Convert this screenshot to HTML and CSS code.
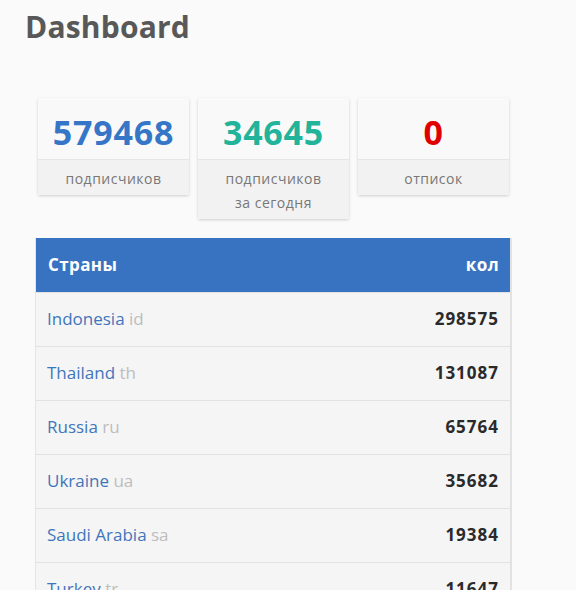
FILE: index.html
```html
<!DOCTYPE html>
<html lang="ru">
<head>
<meta charset="utf-8">
<link rel="stylesheet" href="styles.css">
</head>
<body>
<div class="page">
  <h1 class="title">Dashboard</h1>
  <div class="stats">
    <div class="card">
      <div class="num blue">579468</div>
      <div class="label">подписчиков</div>
    </div>
    <div class="card">
      <div class="num green">34645</div>
      <div class="label">подписчиков<br>за сегодня</div>
    </div>
    <div class="card">
      <div class="num red">0</div>
      <div class="label">отписок</div>
    </div>
  </div>
  <table class="countries">
    <thead>
      <tr><th class="c-name">Страны</th><th class="c-num">кол</th></tr>
    </thead>
    <tbody>
      <tr><td class="c-name"><a class="country">Indonesia</a> <span class="code">id</span></td><td class="c-num">298575</td></tr>
      <tr><td class="c-name"><a class="country">Thailand</a> <span class="code">th</span></td><td class="c-num">131087</td></tr>
      <tr><td class="c-name"><a class="country">Russia</a> <span class="code">ru</span></td><td class="c-num">65764</td></tr>
      <tr><td class="c-name"><a class="country">Ukraine</a> <span class="code">ua</span></td><td class="c-num">35682</td></tr>
      <tr><td class="c-name"><a class="country">Saudi Arabia</a> <span class="code">sa</span></td><td class="c-num">19384</td></tr>
      <tr><td class="c-name"><a class="country">Turkey</a> <span class="code">tr</span></td><td class="c-num">11647</td></tr>
      <tr><td class="c-name"><a class="country">India</a> <span class="code">in</span></td><td class="c-num">9821</td></tr>
    </tbody>
  </table>
</div>
</body>
</html>
```

FILE: styles.css
```css
html, body {
  margin: 0;
  padding: 0;
  background: #fafafa;
}
body {
  font-family: "Open Sans", "Liberation Sans", sans-serif;
  color: #333;
}
.page {
  padding: 7px 0 0 25px;
}
.title {
  margin: 0;
  font-size: 30px;
  line-height: 40px;
  font-weight: 700;
  color: #585858;
  letter-spacing: 0.2px;
}
.stats {
  display: flex;
  align-items: flex-start;
  gap: 9px;
  margin: 51px 0 0 13px;
}
.card {
  width: 151px;
  background: #f9f9f9;
  box-shadow: 0 1px 3px rgba(0,0,0,0.18);
  border-radius: 2px;
}
.num {
  height: 61px;
  line-height: 68px;
  text-align: center;
  font-size: 34px;
  font-weight: 700;
  letter-spacing: 0.8px;
}
.blue { color: #3576c7; }
.green { color: #22b49a; }
.red { color: #e00000; }
.label {
  background: #f2f2f2;
  border-top: 1px solid #e6e6e6;
  padding: 7px 0 4px;
  text-align: center;
  font-size: 14px;
  line-height: 24px;
  color: #777;
  letter-spacing: 0.5px;
}
.countries {
  margin: 19px 0 0 10px;
  width: 477px;
  border-collapse: collapse;
  background: #f5f5f5;
  border-left: 1px solid #e4e4e4;
  border-right: 2px solid #e2e2e2;
}
.countries th {
  background: #3873c2;
  color: #fff;
  font-size: 17px;
  font-weight: 700;
  letter-spacing: 0.4px;
  height: 54px;
  padding: 0 12px;
  box-sizing: border-box;
}
.countries td {
  height: 54px;
  padding: 0 12px 2px 11px;
  border-top: 1px solid #e2e2e2;
  font-size: 17px;
  box-sizing: border-box;
}
.c-name { text-align: left; }
.c-num { text-align: right; }
td.c-num {
  font-weight: 700;
  color: #2a2a2a;
  letter-spacing: 1px;
}
th.c-num, td.c-num {
  padding-right: 11px;
}
.country {
  color: #3f76bb;
  font-size: 17px;
}
.code {
  color: #bdbdbd;
  font-size: 17px;
}
```
